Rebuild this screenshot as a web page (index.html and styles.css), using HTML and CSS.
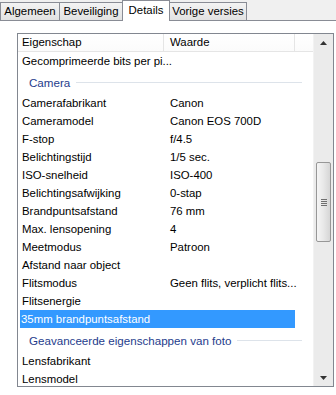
FILE: index.html
```html
<!DOCTYPE html>
<html>
<head>
<meta charset="utf-8">
<link rel="stylesheet" href="styles.css">
</head>
<body>
<div class="tabs">
  <div class="tab t1">Algemeen</div>
  <div class="tab t2">Beveiliging</div>
  <div class="tab t3 sel">Details</div>
  <div class="tab t4">Vorige versies</div>
</div>
<div class="panel">
  <div class="list">
    <div class="content">
      <div class="header">
        <div class="h1">Eigenschap</div>
        <div class="h2">Waarde</div>
        <div class="h3"></div>
      </div>
      <div class="rows">
        <div class="row first"><div class="c1">Gecomprimeerde bits per pi...</div><div class="c2"></div></div>
        <div class="group"><span class="gt">Camera</span><span class="gl"></span></div>
        <div class="row"><div class="c1">Camerafabrikant</div><div class="c2">Canon</div></div>
        <div class="row"><div class="c1">Cameramodel</div><div class="c2">Canon EOS 700D</div></div>
        <div class="row"><div class="c1">F-stop</div><div class="c2">f/4.5</div></div>
        <div class="row"><div class="c1">Belichtingstijd</div><div class="c2">1/5 sec.</div></div>
        <div class="row"><div class="c1">ISO-snelheid</div><div class="c2">ISO-400</div></div>
        <div class="row"><div class="c1">Belichtingsafwijking</div><div class="c2">0-stap</div></div>
        <div class="row"><div class="c1">Brandpuntsafstand</div><div class="c2">76 mm</div></div>
        <div class="row"><div class="c1">Max. lensopening</div><div class="c2">4</div></div>
        <div class="row"><div class="c1">Meetmodus</div><div class="c2">Patroon</div></div>
        <div class="row"><div class="c1">Afstand naar object</div><div class="c2"></div></div>
        <div class="row"><div class="c1">Flitsmodus</div><div class="c2">Geen flits, verplicht flits...</div></div>
        <div class="row"><div class="c1">Flitsenergie</div><div class="c2"></div></div>
        <div class="row selected"><div class="c1">35mm brandpuntsafstand</div><div class="c2"></div></div>
        <div class="group g2"><span class="gt">Geavanceerde eigenschappen van foto</span><span class="gl"></span></div>
        <div class="row"><div class="c1">Lensfabrikant</div><div class="c2"></div></div>
        <div class="row"><div class="c1">Lensmodel</div><div class="c2"></div></div>
      </div>
    </div>
    <div class="scrollbar">
      <div class="arrow up"><svg width="7" height="4" viewBox="0 0 7 4"><path d="M0 4 L3.5 0 L7 4 Z" fill="#333"/></svg></div>
      <div class="track">
        <div class="thumb"><div class="grip"><span></span><span></span><span></span><span></span></div></div>
      </div>
      <div class="arrow down"><svg width="7" height="4" viewBox="0 0 7 4"><path d="M0 0 L3.5 4 L7 0 Z" fill="#333"/></svg></div>
    </div>
  </div>
</div>
</body>
</html>
```

FILE: styles.css
```css
html, body {
  margin: 0;
  padding: 0;
}
body {
  width: 336px;
  height: 395px;
  overflow: hidden;
  background: #ffffff;
  font-family: "Liberation Sans", Arial, sans-serif;
  font-size: 11.4px;
  color: #000;
}
.tabs {
  display: flex;
  align-items: flex-end;
  height: 20px;
  background: #f0f0f0;
  border-bottom: 1px solid #898c95;
}
.tab {
  height: 18px;
  line-height: 17px;
  box-sizing: border-box;
  border: 1px solid #898c95;
  border-bottom: none;
  background: linear-gradient(#f3f3f3, #e2e2e2);
  text-align: center;
  margin-right: -1px;
  white-space: nowrap;
}
.t1 { width: 60px; }
.t2 { width: 64px; }
.t3 { width: 48px; }
.t4 { width: 78px; }
.tab.sel {
  height: 21px;
  line-height: 19px;
  background: #ffffff;
  margin-bottom: -1px;
  position: relative;
  z-index: 1;
}
.panel {
  padding: 12px 2px 0 17px;
}
.list {
  display: flex;
  height: 354px;
  box-sizing: border-box;
  border: 1px solid #828790;
  background: #fff;
  overflow: hidden;
}
.content {
  flex: 1;
  overflow: hidden;
}
.header {
  display: flex;
  height: 18px;
  line-height: 17px;
  border-bottom: 1px solid #e5e5e5;
  box-sizing: border-box;
  background: linear-gradient(#ffffff, #fbfbfb);
}
.h1 {
  width: 146px;
  padding-left: 4px;
  box-sizing: border-box;
  border-right: 1px solid #e5e5e5;
}
.h2 {
  width: 131px;
  padding-left: 6px;
  box-sizing: border-box;
  border-right: 1px solid #e5e5e5;
}
.h3 {
  flex: 1;
}
.row {
  display: flex;
  height: 18px;
  line-height: 18px;
  white-space: nowrap;
}
.row.first {
  height: 19px;
  line-height: 19px;
}
.c1 {
  width: 146px;
  padding-left: 4px;
  box-sizing: border-box;
}
.c2 {
  width: 131px;
  padding-left: 6px;
  box-sizing: border-box;
}
.row.selected {
  margin-left: 2px;
  width: 275px;
  background: #3399ff;
  color: #fff;
}
.row.selected .c1 {
  padding-left: 1px;
  width: 200px;
}
.group {
  display: flex;
  align-items: center;
  height: 23px;
  padding-left: 11px;
  padding-right: 11px;
  color: #1e3c8c;
  font-size: 11.6px;
  white-space: nowrap;
}
.group.g2 {
  height: 24px;
}
.gt {
  padding-right: 6px;
}
.gl {
  flex: 1;
  height: 1px;
  background: #dde3ea;
}
.scrollbar {
  width: 19px;
  display: flex;
  flex-direction: column;
  background: #ebebeb;
  border-left: 1px solid #f2f2f2;
}
.arrow {
  height: 17px;
  display: flex;
  align-items: center;
  justify-content: center;
}
.track {
  flex: 1;
  padding-top: 111px;
  display: flex;
  flex-direction: column;
  align-items: center;
}
.thumb {
  width: 15px;
  height: 80px;
  box-sizing: border-box;
  border: 1px solid #979797;
  border-radius: 2px;
  background: linear-gradient(to right, #f5f5f5, #e8e8e8 50%, #d6d6d6);
  display: flex;
  align-items: center;
  justify-content: center;
}
.grip {
  display: flex;
  flex-direction: column;
  gap: 1px;
}
.grip span {
  display: block;
  width: 6px;
  height: 1px;
  background: #6f6f6f;
}
```
